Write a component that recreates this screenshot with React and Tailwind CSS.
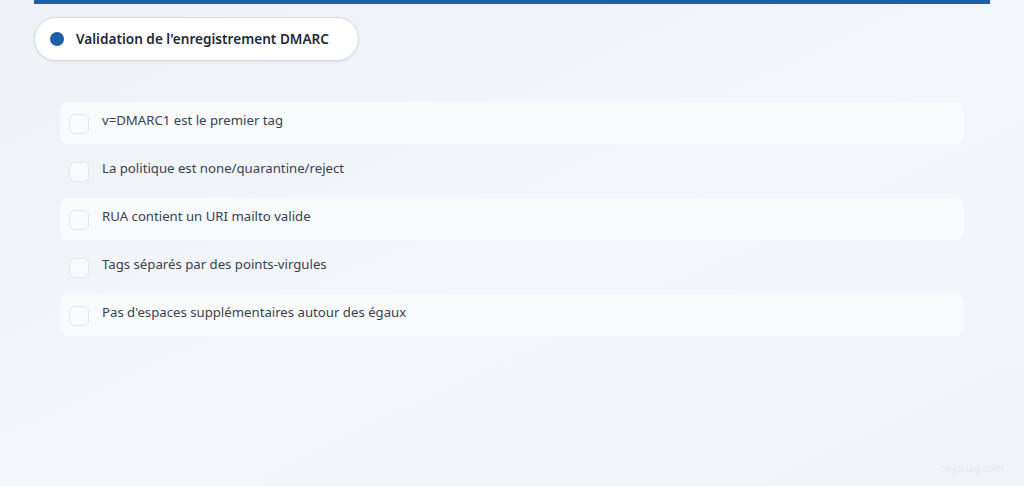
import React from 'react';

const items = [
  'v=DMARC1 est le premier tag',
  'La politique est none/quarantine/reject',
  'RUA contient un URI mailto valide',
  'Tags séparés par des points-virgules',
  "Pas d'espaces supplémentaires autour des égaux",
];

export default function App() {
  return (
    <div
      className="relative h-[486px] w-[1024px] overflow-hidden bg-gradient-to-br from-[#eef1f5] via-[#f3f6fa] to-[#f1f4f8]"
      style={{ fontFamily: '"Noto Sans", "Open Sans", sans-serif' }}
    >
      <div className="ml-[34px] h-[4px] w-[956px] bg-[#1c5ea8]" />

      {/* Title pill */}
      <div className="ml-[34px] mt-[13px] flex h-[44px] w-[325px] items-center rounded-[22px] border border-[#d5dce6] bg-white pl-[15px] shadow-[0_1px_3px_rgba(15,23,42,0.08)]">
        <span className="h-[14px] w-[14px] rounded-full bg-[#1c5ea8]" />
        <span className="ml-[12px] text-[13.6px] font-semibold text-[#1f2937]">
          Validation de l'enregistrement DMARC
        </span>
      </div>

      {/* Checklist */}
      <div className="ml-[60px] mt-[41px] flex w-[904px] flex-col gap-[6px]">
        {items.map((text, i) => (
          <div
            key={i}
            className={
              'flex h-[42px] items-start rounded-[8px] pl-[9px] ' +
              (i % 2 === 0 ? 'bg-[#f8fafc]' : '')
            }
          >
            <span className="mt-[12px] h-[20px] w-[20px] rounded-[5px] border border-[#e2e7ef] bg-[#f9fafb]" />
            <span className="ml-[13px] mt-[8px] text-[13.2px] leading-[20px] text-[#374151]">{text}</span>
          </div>
        ))}
      </div>

      <div className="absolute bottom-[10px] right-[21px] text-[10px] text-[#e6eaf0]">skysnag.com</div>
    </div>
  );
}
